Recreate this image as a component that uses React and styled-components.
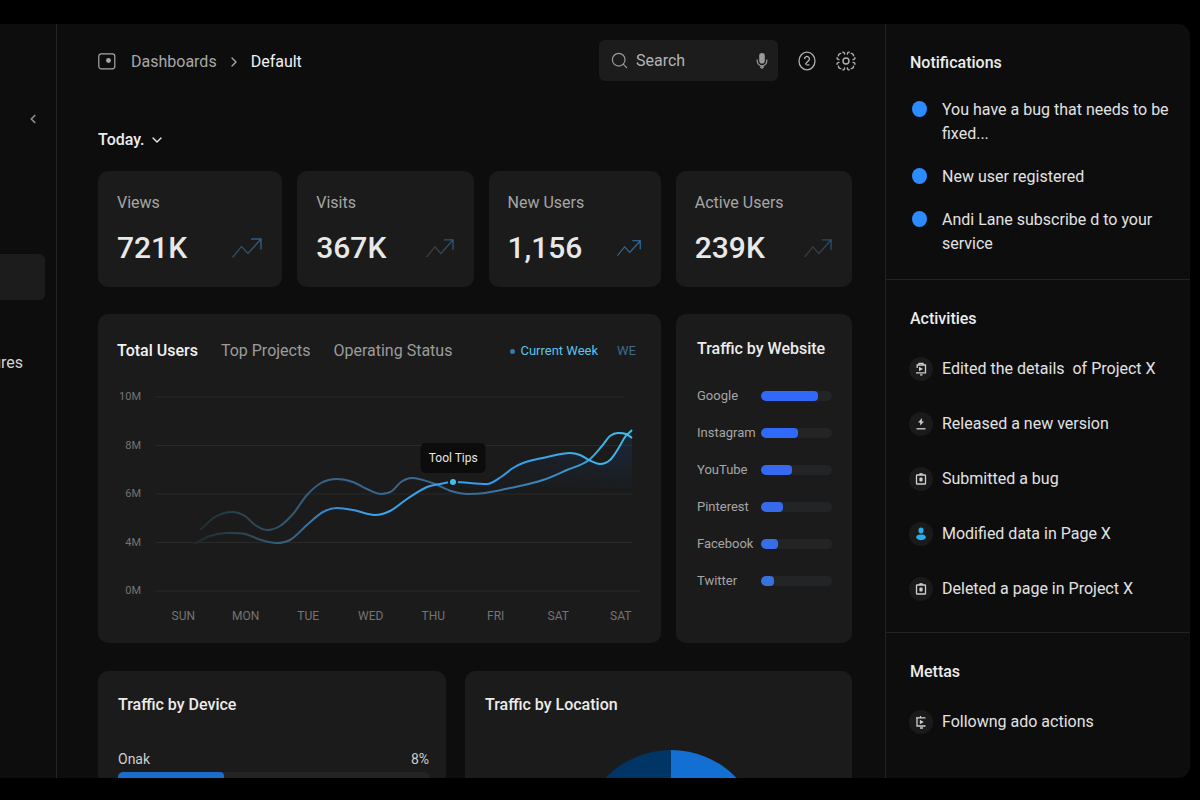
import { useState } from "react"
import styled, { createGlobalStyle } from "styled-components"
import { ChevronDown, ChevronLeft, ChevronRight, Search } from "lucide-react"

const GlobalStyle = createGlobalStyle`
    * {
        box-sizing: border-box;
    }
    body {
        margin: 0;
        background-color: #000;
        color: #e2e2e2;
        font-family: Roboto, "Liberation Sans", sans-serif;
        font-size: 16px;
        line-height: 24px;
    }
    button, input, select {
        font: inherit;
        color: inherit;
        border: 0;
        padding: 0;
        background-color: transparent;
    }
    h2, ul, p {
        margin: 0;
        padding: 0;
        list-style: none;
    }
`

const StyledPage = styled.div`
    height: 100vh;
    padding: 24px 10px 22px 0;
`

const StyledFrame = styled.div`
    display: grid;
    grid-template-columns: 57px minmax(0, 1fr) 305px;
    height: 100%;
    overflow: hidden;
    border-radius: 0 12px 12px 0;
    background-color: #0d0d0d;
`

const StyledSidebar = styled.nav`
    display: flex;
    flex-direction: column;
    padding-top: 83px;
    border-right: 1px solid #242424;
    overflow: hidden;
`

const StyledCollapse = styled.button`
    display: flex;
    align-self: flex-end;
    margin-right: 16px;
    padding: 5px 0;
    color: #8a8a8a;
`

const StyledNavList = styled.ul`
    display: flex;
    flex-direction: column;
    gap: 40px;
    margin-top: 123px;
`

const StyledNavLink = styled.a`
    display: flex;
    align-items: center;
    justify-content: flex-end;
    width: 45px;
    height: 46px;
    padding-right: 22px;
    border-radius: 0 6px 6px 0;
    background-color: ${({ $active }) => $active ? "#1c1c1c" : "transparent"};
    color: #d4d4d4;
    text-decoration: none;
    white-space: nowrap;
`

const StyledMain = styled.main`
    padding: 16px 33px 0 41px;
    overflow: hidden;
`

const StyledHeader = styled.header`
    display: flex;
    align-items: center;
    justify-content: space-between;
`

const StyledBreadcrumb = styled.div`
    display: flex;
    align-items: center;
    gap: 9px;
    padding-top: 2px;
    color: #a8a8a8;
    a {
        color: #a8a8a8;
        text-decoration: none;
    }
    a:first-of-type {
        margin-left: 6px;
    }
    a:last-of-type {
        color: #f2f2f2;
    }
`

const StyledTools = styled.div`
    display: flex;
    align-items: center;
    gap: 19px;
    margin-right: -4px;
    color: #b0b0b0;
`

const StyledSearch = styled.label`
    display: flex;
    align-items: center;
    gap: 7px;
    width: 179px;
    height: 41px;
    padding: 0 9px 0 11px;
    border-radius: 6px;
    background-color: #1c1c1c;
    color: #9a9a9a;
    svg {
        flex: none;
    }
    input {
        flex: 1;
        min-width: 0;
        &:focus{
            outline: none;
        }
        &::placeholder{
            color: #b4b4b4;
            opacity: 1;
        }
    }
`

const StyledIconButton = styled.button`
    display: flex;
    cursor: pointer;
`

const StyledPeriod = styled.div`
    display: inline-flex;
    align-items: center;
    gap: 4px;
    margin: 47px 0 19px;
    color: #ececec;
    font-weight: 500;
    select {
        appearance: none;
        line-height: 24px;
    }
`

const StyledCard = styled.section`
    border-radius: 10px;
    background-color: #1b1b1b;
`

const StyledStats = styled.div`
    display: grid;
    grid-template-columns: 184fr 176fr 172fr 176fr;
    gap: 15px;
`

const StyledStat = styled(StyledCard)`
    padding: 20px 20px 21px 19px;
    color: #a6a6a6;
    div {
        display: flex;
        align-items: center;
        justify-content: space-between;
        margin-top: 15px;
    }
    strong {
        color: #e8e8e8;
        font-size: 30px;
        font-weight: 500;
        line-height: 36px;
    }
`

const StyledMiddle = styled.div`
    display: grid;
    grid-template-columns: minmax(0, 563fr) minmax(0, 176fr);
    gap: 15px;
    margin: 27px 0 28px;
`

const StyledBottom = styled.div`
    display: grid;
    grid-template-columns: 348fr 387fr;
    gap: 19px;
`

const StyledTitle = styled.h2`
    color: #ececec;
    font-size: 16px;
    font-weight: 500;
    line-height: 24px;
    white-space: nowrap;
`

const StyledChartCard = styled(StyledCard)`
    padding: 25px 9px 19px 19px;
`

const StyledChartHead = styled.div`
    display: flex;
    align-items: center;
    justify-content: space-between;
    padding-right: 16px;
`

const StyledTabs = styled.div`
    display: flex;
    gap: 23px;
`

const StyledTab = styled.button`
    color: ${({ $active }) => $active ? "#f2f2f2" : "#9c9c9c"};
    font-weight: ${({ $active }) => $active ? 500 : 400};
    cursor: pointer;
`

const StyledLegend = styled.div`
    display: flex;
    align-items: center;
    gap: 19px;
    color: #3f6b8c;
    font-size: 13px;
    span {
        display: flex;
        align-items: center;
        gap: 5px;
        color: #5cc3ee;
    }
    span::before {
        content: "";
        width: 5px;
        height: 5px;
        border-radius: 50%;
        background-color: #3678b0;
    }
`

const StyledChart = styled.div`
    display: grid;
    grid-template-columns: 24px minmax(0, 1fr);
    column-gap: 14px;
    row-gap: 9px;
    margin-top: 26px;
    color: #747474;
    font-size: 12px;
    line-height: 16px;
`

const StyledYAxis = styled.div`
    display: flex;
    flex-direction: column;
    justify-content: space-between;
    font-size: 11px;
    text-align: right;
`

const StyledPlot = styled.div`
    position: relative;
    padding: 8px 12px 8px 0;
    svg {
        display: block;
        width: 100%;
        height: 194px;
        overflow: visible;
    }
`

const StyledXAxis = styled.div`
    display: grid;
    grid-column: 2;
    grid-template-columns: repeat(8, 1fr);
    margin-left: -3px;
    text-align: center;
`

const StyledTooltip = styled.div`
    position: absolute;
    top: 54px;
    left: 60%;
    transform: translateX(-50%);
    padding: 7px 8px;
    border-radius: 5px;
    background-color: #0c0c0c;
    color: #e6e6e6;
    font-size: 12px;
    white-space: nowrap;
`

const StyledSites = styled(StyledCard)`
    padding: 23px 20px 0 21px;
    ul {
        display: flex;
        flex-direction: column;
        gap: 21px;
        margin-top: 27px;
    }
    li {
        display: grid;
        grid-template-columns: 64px minmax(0, 1fr);
        align-items: center;
        color: #a6a6a6;
        font-size: 13px;
        line-height: 16px;
    }
`

const StyledTrack = styled.div`
    height: 10px;
    border-radius: 5px;
    background-color: #222425;
    overflow: hidden;
`

const StyledFill = styled.div`
    height: 100%;
    border-radius: 4px;
    background-color: ${({ $color }) => $color};
`

const StyledBottomCard = styled(StyledCard)`
    padding: 22px 17px 16px 20px;
`

const StyledDevice = styled.div`
    margin-top: 33px;
    p {
        display: flex;
        justify-content: space-between;
        margin-bottom: 4px;
        color: #cfcfcf;
        font-size: 14px;
        line-height: 18px;
    }
`

const StyledPie = styled.div`
    display: flex;
    justify-content: center;
    margin-top: 33px;
    padding-left: 22px;
`

const StyledAside = styled.aside`
    border-left: 1px solid #222;
    overflow: hidden;
`

const StyledFeed = styled.section`
    padding: 27px 16px ${({ $bottom }) => $bottom}px 24px;
    & + & {
        border-top: 1px solid #222;
    }
    ul {
        display: flex;
        flex-direction: column;
        gap: ${({ $gap }) => $gap}px;
        margin-top: ${({ $top }) => $top}px;
    }
    li {
        display: grid;
        grid-template-columns: 20px minmax(0, 1fr);
        column-gap: 12px;
    }
`

const StyledBullet = styled.span`
    width: 15px;
    height: 16px;
    margin: 3px 0 0 2px;
    border-radius: 50%;
    background-color: #2c8cff;
`

const StyledBadge = styled.span`
    display: flex;
    align-items: center;
    justify-content: center;
    width: 24px;
    height: 24px;
    margin-left: -1px;
    border-radius: 50%;
    background-color: #1a1a1a;
    color: #cfcfcf;
`

const stats = [
    { label: "Views", value: "721K", width: 30, from: "#33485a", to: "#2f5f88" },
    { label: "Visits", value: "367K", width: 28, from: "#3a3f44", to: "#2b5b85" },
    { label: "New Users", value: "1,156", width: 24, from: "#336690", to: "#2f78b8" },
    { label: "Active Users", value: "239K", width: 28, from: "#333b42", to: "#27527a" },
]

const sites = [
    { name: "Google", value: 80, color: "#3069f8" },
    { name: "Instagram", value: 52, color: "#3069f8" },
    { name: "YouTube", value: 43, color: "#356af0" },
    { name: "Pinterest", value: 31, color: "#366ae8" },
    { name: "Facebook", value: 24, color: "#376ee6" },
    { name: "Twitter", value: 18, color: "#3872dc" },
]

const notifications = [
    "You have a bug that needs to be fixed...",
    "New user registered",
    "Andi Lane subscribe d to your service",
]

const activities = [
    { text: "Edited the details\u00a0 of Project X", icon: "edit" },
    { text: "Released a new version", icon: "release" },
    { text: "Submitted a bug", icon: "clipboard" },
    { text: "Modified data in Page X", icon: "person" },
    { text: "Deleted a page in Project X", icon: "clipboard" },
]

const tabs = ["Total Users", "Top Projects", "Operating Status"]
const days = ["SUN", "MON", "TUE", "WED", "THU", "FRI", "SAT", "SAT"]
const levels = ["10M", "8M", "6M", "4M", "0M"]

const previousWeek = [
    [45, 133], [60, 120], [77, 115], [90, 119], [100, 128], [112, 133], [125, 129],
    [138, 117], [152, 98], [166, 86], [182, 82], [198, 85], [212, 92], [226, 97],
    [237, 94], [246, 85], [257, 81], [280, 87], [296, 94], [313, 97], [330, 96],
    [355, 91], [388, 83], [412, 73], [434, 63], [447, 49], [455, 39], [463, 36],
    [471, 37], [477, 41],
]
const currentWeek = [
    [39, 147], [55, 139], [72, 136], [90, 137], [106, 143], [121, 146], [135, 143],
    [153, 127], [168, 115], [182, 111], [198, 113], [220, 118], [235, 114], [252, 102],
    [272, 90], [285, 87], [298, 85], [332, 87], [346, 80], [358, 71], [368, 66],
    [392, 60], [415, 56], [425, 58], [434, 63], [445, 67], [455, 63], [463, 52],
    [470, 40], [477, 33],
]

// cubic path through the points, flat at every peak and dip
function smooth(points){
    const slopes = points.slice(1).map(([x, y], i) => (y - points[i][1]) / (x - points[i][0]))
    const tangents = points.map((_, i) => {
        if(i === 0) return slopes[0]
        if(i === points.length - 1) return slopes[i - 1]
        const a = slopes[i - 1]
        const b = slopes[i]
        return a * b <= 0 ? 0 : (a + b) / 2
    })
    return points.slice(1).reduce((path, [x, y], i) => {
        const [px, py] = points[i]
        const third = (x - px) / 3
        return `${path} C${px + third} ${py + tangents[i] * third} ${x - third} ${y - tangents[i + 1] * third} ${x} ${y}`
    }, `M${points[0].join(" ")}`)
}

const TrendIcon = ({ id, width, from, to }) => (
    <svg width={width} height={width * 2 / 3} viewBox="0 0 30 20" fill="none" stroke={`url(#${id})`} strokeWidth="1.4" aria-hidden="true">
        <defs>
            <linearGradient id={id} gradientUnits="userSpaceOnUse" x1="0" y1="20" x2="30" y2="0">
                <stop offset="0.3" stopColor={from} />
                <stop offset="1" stopColor={to} />
            </linearGradient>
        </defs>
        <path d="M0.5 19.5 L9.5 8.5 L16 15.5 L29 1 M19 1 H29 V11.5" />
    </svg>
)

const PanelIcon = () => (
    <svg width="18" height="18" viewBox="0 0 18 18" fill="none" stroke="currentColor" strokeWidth="1.2" aria-hidden="true">
        <rect x="0.8" y="0.8" width="16" height="15" rx="2.5" />
        <circle cx="10.5" cy="7.5" r="2.4" fill="currentColor" stroke="none" />
    </svg>
)

const MicIcon = () => (
    <svg width="14" height="18" viewBox="0 0 14 18" fill="none" stroke="currentColor" strokeWidth="1.2" aria-hidden="true">
        <rect x="4.2" y="1" width="5.6" height="10.5" rx="2.8" fill="currentColor" stroke="none" />
        <path d="M2.2 7.5 V9 A4.8 4.8 0 0 0 11.8 9 V7.5 M7 14 V17 M5 15.2 H9" />
    </svg>
)

const HelpIcon = () => (
    <svg width="20" height="20" viewBox="0 0 20 20" fill="none" stroke="currentColor" strokeWidth="1.3" aria-hidden="true">
        <ellipse cx="10" cy="10" rx="8" ry="8.8" />
        <path d="M7.6 8 A2.4 2.4 0 1 1 12 9.2 C11.2 10.4 9.2 11.6 8.4 13.6 M9.4 13.8 H12.4" />
    </svg>
)

const GearIcon = () => (
    <svg width="20" height="20" viewBox="0 0 20 20" fill="none" stroke="currentColor" strokeWidth="1.4" strokeLinecap="round" strokeLinejoin="round" aria-hidden="true">
        <circle cx="10" cy="10" r="3" />
        {[0, 90, 180, 270].map((angle) => (
            <g key={angle} transform={`rotate(${angle} 10 10)`}>
                <path d="M8.6 3 Q8.4 0.9 6.8 1.1 M11.4 3 Q11.6 0.9 13.2 1.1" />
                <path d="M15.2 2.4 Q17.4 2.6 17.6 4.8" />
            </g>
        ))}
    </svg>
)

const ActivityIcon = ({ name }) => (
    <svg width="14" height="14" viewBox="0 0 14 14" fill="none" stroke="currentColor" strokeWidth="1.3" aria-hidden="true">
        {name === "edit" && <>
            <path d="M2.5 3 H11.5 V10.8 H2 M5 3 V1.4 H9 V3 M3.2 3 V6 M6 12.9 H8.5" />
            <path d="M5 4.8 L9 7 L5 9.2 Z" fill="currentColor" stroke="none" />
        </>}
        {name === "release" && <>
            <path d="M8 1 L4 5.6 H6.2 V8.5 L10 4.4 H7.8 Z" fill="currentColor" stroke="none" />
            <path d="M2.5 11.8 H11.5" />
        </>}
        {name === "clipboard" && <>
            <rect x="2.5" y="3" width="9" height="9" rx="0.6" />
            <path d="M5 2.2 H9 M7 1 V3" />
            <rect x="5.4" y="5.6" width="3.2" height="4" rx="1" fill="currentColor" stroke="none" />
        </>}
        {name === "person" && <g fill="#23aef0" stroke="none">
            <ellipse cx="7" cy="3.4" rx="2.5" ry="3" />
            <path d="M2.2 10.6 C2.2 8.3 4.5 7.6 7 7.6 C9.5 7.6 11.8 8.3 11.8 10.6 C11 12.4 9 13.2 7 13.2 C5 13.2 3 12.4 2.2 10.6 Z" />
        </g>}
        {name === "follow" && <>
            <path d="M2 2.8 H11.5 M6.5 1 V2.8 M3 2.8 V11 H11.5 M6 13 H9" />
            <path d="M5.8 4.8 L9.8 7 L5.8 9.2 Z" fill="currentColor" stroke="none" />
        </>}
    </svg>
)

const Bar = ({ value, color }) => (
    <StyledTrack>
        <StyledFill $color={color} style={{ width: `${value}%` }} />
    </StyledTrack>
)

const Stat = ({ label, value, ...icon }) => (
    <StyledStat>
        {label}
        <div>
            <strong>{value}</strong>
            <TrendIcon id={`trend-${value.replace(",", "")}`} {...icon} />
        </div>
    </StyledStat>
)

const UsersChart = () => (
    <StyledChart>
        <StyledYAxis>
            {levels.map((level) => <span key={level}>{level}</span>)}
        </StyledYAxis>
        <StyledPlot>
            <svg viewBox="0 0 485 194" preserveAspectRatio="none" aria-hidden="true">
                <defs>
                    <linearGradient id="current" gradientUnits="userSpaceOnUse" x1="39" y1="0" x2="477" y2="0">
                        <stop offset="0" stopColor="#1b2a2e" />
                        <stop offset="0.1" stopColor="#2a444e" />
                        <stop offset="0.24" stopColor="#38698f" />
                        <stop offset="0.33" stopColor="#3c8fdd" />
                        <stop offset="0.42" stopColor="#38a8ee" />
                        <stop offset="0.7" stopColor="#369be6" />
                        <stop offset="1" stopColor="#3fbcec" />
                    </linearGradient>
                    <linearGradient id="previous" gradientUnits="userSpaceOnUse" x1="39" y1="0" x2="477" y2="0">
                        <stop offset="0" stopColor="#1e2b30" />
                        <stop offset="0.1" stopColor="#2a444e" />
                        <stop offset="0.3" stopColor="#35648a" />
                        <stop offset="0.65" stopColor="#3a6c94" />
                        <stop offset="0.85" stopColor="#3a92d0" />
                        <stop offset="1" stopColor="#3fc4f2" />
                    </linearGradient>
                    <linearGradient id="glow" x1="0" y1="0" x2="1" y2="0">
                        <stop offset="0.45" stopColor="#2060c0" stopOpacity="0" />
                        <stop offset="1" stopColor="#2060c0" stopOpacity="0.14" />
                    </linearGradient>
                    <linearGradient id="fade" x1="0" y1="0" x2="0" y2="1">
                        <stop offset="0.3" stopColor="#fff" />
                        <stop offset="0.5" stopColor="#000" />
                    </linearGradient>
                    <mask id="fade-mask">
                        <rect width="485" height="194" fill="url(#fade)" />
                    </mask>
                </defs>
                {levels.map((level, i) => (
                    <path key={level} d={`M0 ${i * 48.5} H${[470, 477, 477, 477, 485][i]}`} stroke="#292929" />
                ))}
                <path d={`${smooth(currentWeek)} V120 H39 Z`} fill="url(#glow)" mask="url(#fade-mask)" />
                <g fill="none" strokeWidth="2">
                    <path d={smooth(previousWeek)} stroke="url(#previous)" />
                    <path d={smooth(currentWeek)} stroke="url(#current)" />
                </g>
                <circle cx="298" cy="85" r="4" fill="#3fc0f0" stroke="#1b1b1b" strokeWidth="2" />
            </svg>
            <StyledTooltip>Tool Tips</StyledTooltip>
        </StyledPlot>
        <StyledXAxis>
            {days.map((day, i) => <span key={i}>{day}</span>)}
        </StyledXAxis>
    </StyledChart>
)

const Feed = ({ title, children, ...props }) => (
    <StyledFeed {...props}>
        <StyledTitle>{title}</StyledTitle>
        <ul>{children}</ul>
    </StyledFeed>
)

const App = () => {
    const [tab, setTab] = useState(tabs[0])
    const [query, setQuery] = useState("")

    return (
        <StyledPage>
            <GlobalStyle />
            <StyledFrame>
                <StyledSidebar>
                    <StyledCollapse aria-label="Collapse menu"><ChevronLeft size={14} strokeWidth={3} /></StyledCollapse>
                    <StyledNavList>
                        <li><StyledNavLink href="#default" $active aria-label="Default" /></li>
                        <li><StyledNavLink href="#features">ures</StyledNavLink></li>
                    </StyledNavList>
                </StyledSidebar>

                <StyledMain>
                    <StyledHeader>
                        <StyledBreadcrumb>
                            <PanelIcon />
                            <a href="#dashboards">Dashboards</a>
                            <ChevronRight size={16} strokeWidth={2} />
                            <a href="#default">Default</a>
                        </StyledBreadcrumb>
                        <StyledTools>
                            <StyledSearch>
                                <Search size={19} strokeWidth={1.5} />
                                <input
                                    aria-label="Search"
                                    placeholder="Search"
                                    value={query}
                                    onChange={(e) => setQuery(e.target.value)}
                                />
                                <MicIcon />
                            </StyledSearch>
                            <StyledIconButton aria-label="Help"><HelpIcon /></StyledIconButton>
                            <StyledIconButton aria-label="Settings"><GearIcon /></StyledIconButton>
                        </StyledTools>
                    </StyledHeader>

                    <StyledPeriod>
                        <select aria-label="Period">
                            <option>Today.</option>
                        </select>
                        <ChevronDown size={16} strokeWidth={2} />
                    </StyledPeriod>

                    <StyledStats>
                        {stats.map((stat) => <Stat key={stat.label} {...stat} />)}
                    </StyledStats>

                    <StyledMiddle>
                        <StyledChartCard>
                            <StyledChartHead>
                                <StyledTabs>
                                    {tabs.map((name) => (
                                        <StyledTab key={name} $active={name === tab} onClick={() => setTab(name)}>{name}</StyledTab>
                                    ))}
                                </StyledTabs>
                                <StyledLegend><span>Current Week</span>WE</StyledLegend>
                            </StyledChartHead>
                            <UsersChart />
                        </StyledChartCard>
                        <StyledSites>
                            <StyledTitle>Traffic by Website</StyledTitle>
                            <ul>
                                {sites.map(({ name, value, color }) => (
                                    <li key={name}>{name}<Bar value={value} color={color} /></li>
                                ))}
                            </ul>
                        </StyledSites>
                    </StyledMiddle>

                    <StyledBottom>
                        <StyledBottomCard>
                            <StyledTitle>Traffic by Device</StyledTitle>
                            <StyledDevice>
                                <p><span>Onak</span><span>8%</span></p>
                                <Bar value={34} color="#1a6dcc" />
                            </StyledDevice>
                        </StyledBottomCard>
                        <StyledBottomCard>
                            <StyledTitle>Traffic by Location</StyledTitle>
                            <StyledPie>
                                <svg width="182" height="182" viewBox="0 0 182 182" aria-hidden="true">
                                    <path d="M91 0 A91 91 0 0 0 91 182 Z" fill="#003566" />
                                    <path d="M91 0 A91 91 0 0 1 91 182 Z" fill="#146fd2" />
                                </svg>
                            </StyledPie>
                        </StyledBottomCard>
                    </StyledBottom>
                </StyledMain>

                <StyledAside>
                    <Feed title="Notifications" $top={23} $gap={19} $bottom={23}>
                        {notifications.map((text) => <li key={text}><StyledBullet />{text}</li>)}
                    </Feed>
                    <Feed title="Activities" $top={26} $gap={31} $bottom={31}>
                        {activities.map(({ text, icon }) => (
                            <li key={text}><StyledBadge><ActivityIcon name={icon} /></StyledBadge>{text}</li>
                        ))}
                    </Feed>
                    <Feed title="Mettas" $top={26} $gap={31} $bottom={31}>
                        <li><StyledBadge><ActivityIcon name="follow" /></StyledBadge>Followng ado actions</li>
                    </Feed>
                </StyledAside>
            </StyledFrame>
        </StyledPage>
    )
}

export default App
